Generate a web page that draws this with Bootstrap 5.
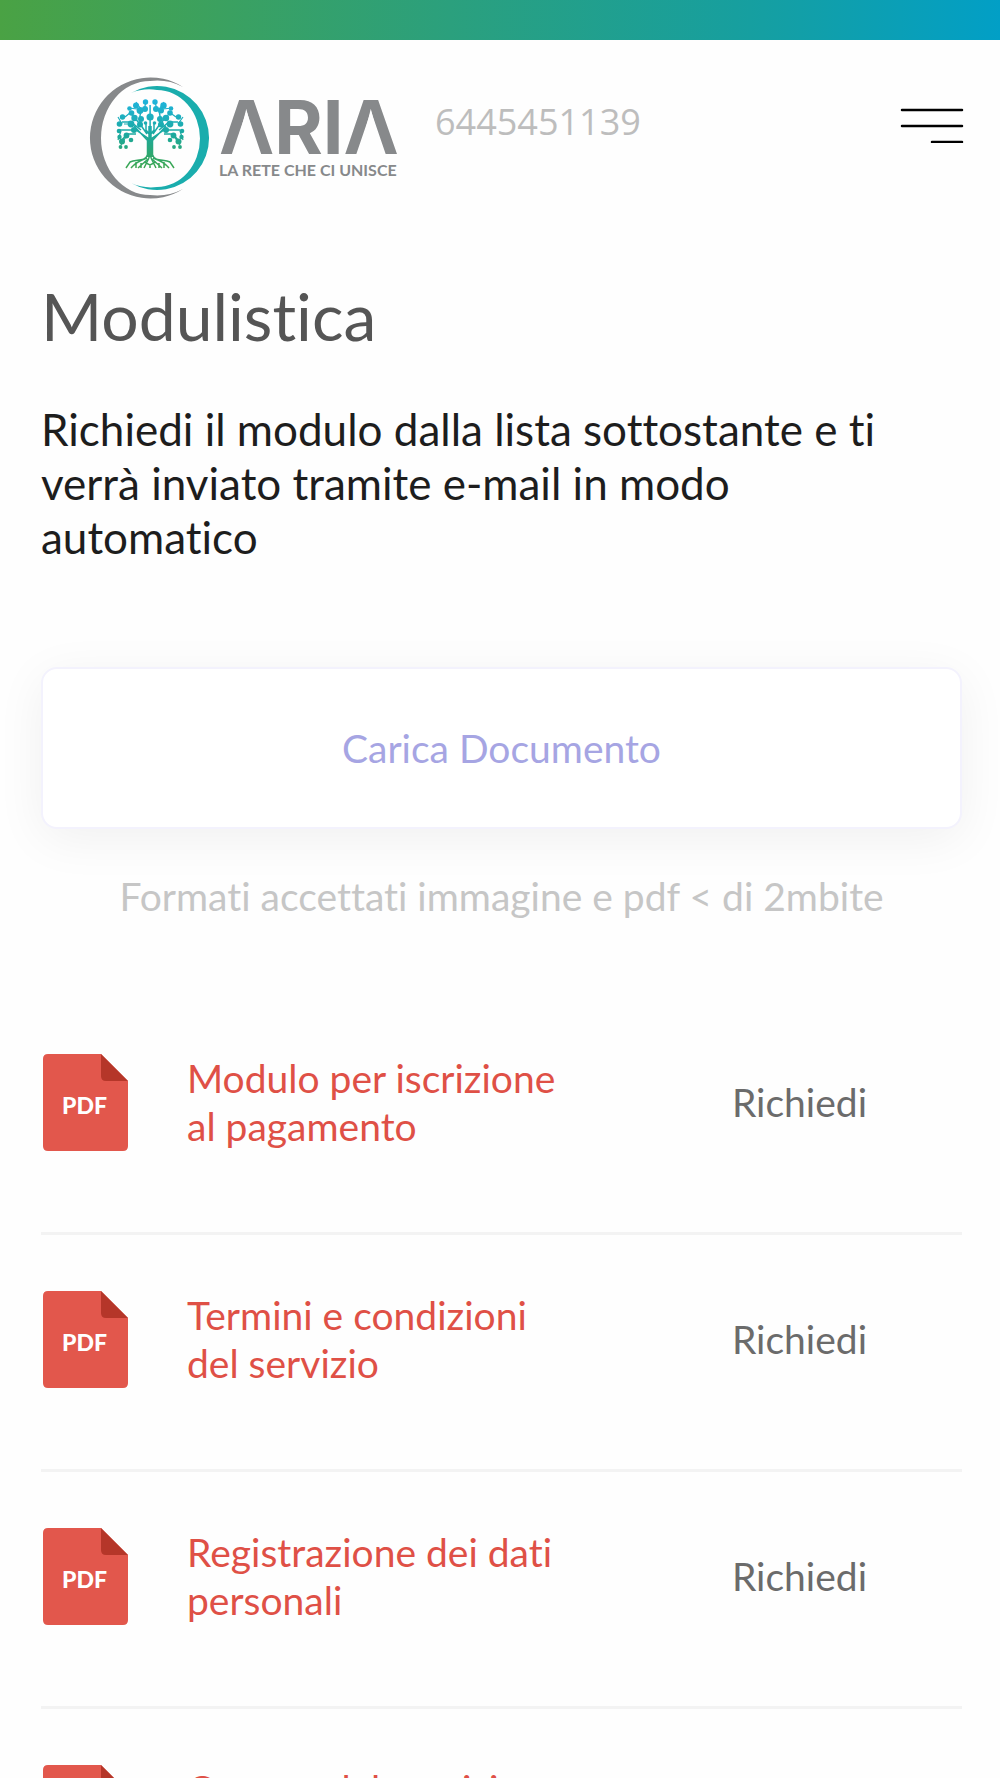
<!DOCTYPE html>
<html lang="it">
<head>
<meta charset="utf-8">
<meta name="viewport" content="width=device-width, initial-scale=1">
<title>Modulistica - ARIA</title>
<link href="https://cdn.jsdelivr.net/npm/bootstrap@5.3.0/dist/css/bootstrap.min.css" rel="stylesheet">
<style>
  body { font-family: Lato, "Open Sans", sans-serif; font-variant-ligatures: none; color: #1d1d1d; background: #fefefe; }
  .top-band { height: 40px; background: linear-gradient(90deg, #4aa244 0%, #2ba07d 45%, #169fa0 75%, #029fc6 100%); }
  .site-head { padding: 36px 36px 0 88px; }
  .brand-logo { width: 320px; height: 126px; }
  .client-code { font-family: "Open Sans", "Noto Sans", sans-serif; font-size: 36px; line-height: 48px; color: #bdbdbd; margin: 22px 0 0 27px; }
  .menu-btn { margin-top: 31px; line-height: 0; }
  .page-main { padding: 74px 38px 0 41px; }
  .page-title { font-size: 66px; line-height: 80px; color: #555; }
  .intro { font-size: 44px; line-height: 54px; margin-top: 46px; max-width: 880px; }
  .upload-btn { height: 162px; margin-top: 103px; font-size: 39px; color: #a6a5e3; background: #fff; border: 2px solid #f3f2fd; border-radius: 16px; box-shadow: 0 10px 50px rgba(0,0,0,.06); }
  .upload-btn:hover { color: #8b89dc; background: #fff; border-color: #e5e3fb; }
  .format-note { font-size: 39px; line-height: 48px; color: #c6c6c6; margin-top: 43px; }
  .doc-list { margin-top: 78px; }
  .doc-row { height: 237px; padding: 56px 95px 0 2px; border-bottom: 3px solid #f3f3f3; }
  .pdf-icon { width: 86px; height: 98px; }
  .doc-title { width: 400px; margin-left: 58px; font-size: 39px; line-height: 48px; color: #df5046; }
  .ask-btn { font-size: 39px; line-height: 48px; color: #6b6b6b; margin-top: 24px; }
</style>
</head>
<body>
<div class="top-band"></div>
<header class="site-head d-flex align-items-start">
  <a href="#" class="d-block" aria-label="ARIA">
    <svg class="brand-logo d-block" viewBox="88 76 320 126">
      <defs>
        <linearGradient id="leaf" gradientUnits="userSpaceOnUse" x1="0" y1="98" x2="0" y2="170">
          <stop offset="0" stop-color="#1fb4e0"/><stop offset=".5" stop-color="#1ba9a0"/><stop offset="1" stop-color="#3ea64b"/>
        </linearGradient>
      </defs>
      <path fill="#87898b" d="M183 87A60.500 60.500 0 1 0 183 189A56 57 0 0 1 150 195A49 57 0 0 1 150 81A56 57 0 0 1 183 87Z"/>
      <path fill="#1aadad" d="M131 93A52 52 0 1 1 131 183A48 48 0 0 0 157 187A43 48.500 0 0 0 157 90A48 48 0 0 0 131 93Z"/>
      <g stroke="url(#leaf)" fill="none" stroke-width="1.500">
        <path d="M147.500 157V138L136 130H120M149 158V126M151 158V126M152.500 157V138L164 130H180M150.100 157V117M146 123V130L149 134M154 123V130L151 134M148 141L134 126M152 141L166 126M147 134L140 124V116M153 134L160 124V116M141 130L131 122H122M159 130L169 122H178M136 134H127L122 140M164 134H173L178 140M140 124L132 115M160 124L168 115M150.100 117V105M140 116L141 110M160 116L159 110"/>
        <path d="M147.500 155C145 162 136 159 130 162L126 168M147 158C141 160 136 162 131 168M148 159L138 168M149 158L144 168M152.500 155C155 162 164 159 170 162L174 168M153 158C159 160 164 162 169 168M152 159L162 168M151 158L156 168M136 162L136 168M164 162L164 168M144 162L150 165L156 162M150 165V168M141 163L141 168M159 163L159 168"/>
        <path stroke-width="1.200" d="M122 124L118 117M131 124L124 124M131 112L125 117M137 109L129 108M143 112L136 102M146 102L144 110M155 102L157 110M164 102L158 111M163 109L172 108M169 112L176 117M178 124L183 117M121 131L118 140M127 135L121 145M180 131L183 140M173 135L180 145"/>
      </g>
      <g fill="url(#leaf)">
        <circle cx="136" cy="105.500" r="3"/><circle cx="145.500" cy="102" r="2.700"/><circle cx="155" cy="102" r="2.700"/><circle cx="163.500" cy="105.500" r="3.200"/>
        <circle cx="129.500" cy="108.500" r="2.300"/><circle cx="171" cy="108.500" r="2.300"/><circle cx="145" cy="109" r="3"/><circle cx="156" cy="109" r="3"/>
        <circle cx="140" cy="110.500" r="3.400"/><circle cx="161" cy="110.500" r="3"/><circle cx="150.100" cy="117" r="3.600"/><circle cx="131.500" cy="113" r="2.800"/>
        <circle cx="170" cy="113" r="2.800"/><circle cx="122.500" cy="117" r="2.700"/><circle cx="178.500" cy="117" r="2.700"/><circle cx="134.500" cy="118" r="3.200"/>
        <circle cx="166" cy="118" r="3.200"/><circle cx="141" cy="119" r="3"/><circle cx="160" cy="119" r="3"/><circle cx="119.500" cy="124" r="2.800"/>
        <circle cx="180.500" cy="124" r="2.800"/><circle cx="131" cy="124" r="3.400"/><circle cx="170" cy="124" r="3.400"/><circle cx="140" cy="124.500" r="3"/>
        <circle cx="161" cy="124.500" r="3"/><circle cx="119" cy="131" r="2.300"/><circle cx="182" cy="131" r="2.300"/><circle cx="134" cy="130" r="3"/>
        <circle cx="166" cy="130" r="3"/><circle cx="126.500" cy="135.500" r="2.900"/><circle cx="173.500" cy="135.500" r="2.900"/><circle cx="119.500" cy="137" r="2.200"/>
        <circle cx="181.500" cy="137" r="2.200"/><circle cx="122" cy="141.500" r="3"/><circle cx="178.500" cy="141.500" r="3"/><circle cx="131" cy="140" r="2.300"/>
        <circle cx="170" cy="140" r="2.300"/><circle cx="120.500" cy="147" r="1.900"/><circle cx="126" cy="147" r="1.900"/><circle cx="174" cy="147" r="1.900"/><circle cx="180" cy="147" r="1.900"/>
        <circle cx="145.500" cy="123" r="1.800"/><circle cx="154.500" cy="123" r="1.800"/>
      </g>
      <text x="219" y="154" font-family="Inter, sans-serif" font-weight="700" font-size="74" fill="#87898b">ARIA</text>
      <path fill="#fefefe" d="M246.500 111L261.500 155H231.500ZM371 111L386 155H356Z"/>
      <text x="219" y="176" font-family="Lato, sans-serif" font-weight="700" font-size="16" fill="#87898b">LA RETE CHE CI UNISCE</text>
    </svg>
  </a>
  <span class="client-code">6445451139</span>
  <button type="button" class="btn p-0 border-0 menu-btn ms-auto" aria-label="Menu">
    <svg width="64" height="36" viewBox="0 0 64 36" stroke="#000" stroke-width="2.500" stroke-linecap="round"><path d="M2 3H62M2 19H62M32 35H62"/></svg>
  </button>
</header>
<main class="page-main">
  <h1 class="page-title fw-normal mb-0">Modulistica</h1>
  <p class="intro mb-0">Richiedi il modulo dalla lista sottostante e ti verrà inviato tramite e-mail in modo automatico</p>
  <button type="button" class="btn upload-btn w-100">Carica Documento</button>
  <p class="format-note text-center mb-0">Formati accettati immagine e pdf &lt; di 2mbite</p>
  <ul class="doc-list list-unstyled mb-0">
    <li class="doc-row d-flex align-items-start">
      <svg class="pdf-icon flex-shrink-0" viewBox="0 0 86 98"><path fill="#e2574c" d="M5 0H58L85 27V92Q85 97 80 97H5Q0 97 0 92V5Q0 0 5 0Z"/><path fill="#b53629" d="M58 0L85 27H63Q58 27 58 22Z"/><text x="19" y="60" font-family="Lato, sans-serif" font-weight="900" font-size="23" fill="#fff">PDF</text></svg>
      <div class="doc-title">Modulo per iscrizione<br>al pagamento</div>
      <button type="button" class="btn p-0 border-0 ask-btn ms-auto">Richiedi</button>
    </li>
    <li class="doc-row d-flex align-items-start">
      <svg class="pdf-icon flex-shrink-0" viewBox="0 0 86 98"><path fill="#e2574c" d="M5 0H58L85 27V92Q85 97 80 97H5Q0 97 0 92V5Q0 0 5 0Z"/><path fill="#b53629" d="M58 0L85 27H63Q58 27 58 22Z"/><text x="19" y="60" font-family="Lato, sans-serif" font-weight="900" font-size="23" fill="#fff">PDF</text></svg>
      <div class="doc-title">Termini e condizioni<br>del servizio</div>
      <button type="button" class="btn p-0 border-0 ask-btn ms-auto">Richiedi</button>
    </li>
    <li class="doc-row d-flex align-items-start">
      <svg class="pdf-icon flex-shrink-0" viewBox="0 0 86 98"><path fill="#e2574c" d="M5 0H58L85 27V92Q85 97 80 97H5Q0 97 0 92V5Q0 0 5 0Z"/><path fill="#b53629" d="M58 0L85 27H63Q58 27 58 22Z"/><text x="19" y="60" font-family="Lato, sans-serif" font-weight="900" font-size="23" fill="#fff">PDF</text></svg>
      <div class="doc-title">Registrazione dei dati<br>personali</div>
      <button type="button" class="btn p-0 border-0 ask-btn ms-auto">Richiedi</button>
    </li>
    <li class="doc-row d-flex align-items-start">
      <svg class="pdf-icon flex-shrink-0" viewBox="0 0 86 98"><path fill="#e2574c" d="M5 0H58L85 27V92Q85 97 80 97H5Q0 97 0 92V5Q0 0 5 0Z"/><path fill="#b53629" d="M58 0L85 27H63Q58 27 58 22Z"/><text x="19" y="60" font-family="Lato, sans-serif" font-weight="900" font-size="23" fill="#fff">PDF</text></svg>
      <div class="doc-title">Canone del servizio</div>
      <button type="button" class="btn p-0 border-0 ask-btn ms-auto">Richiedi</button>
    </li>
  </ul>
</main>
<script src="https://cdn.jsdelivr.net/npm/bootstrap@5.3.0/dist/js/bootstrap.bundle.min.js"></script>
</body>
</html>
